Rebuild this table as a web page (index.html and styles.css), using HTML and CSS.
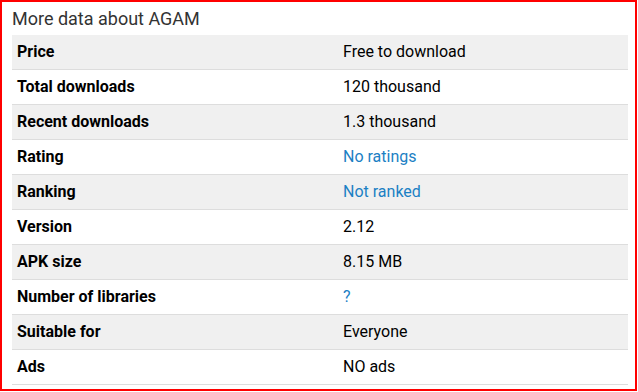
FILE: index.html
```html
<!DOCTYPE html>
<html>
<head>
<meta charset="utf-8">
<link rel="stylesheet" href="styles.css">
</head>
<body>
<div class="frame">
  <h2 class="title">More data about AGAM</h2>
  <div class="table">
    <div class="row odd"><div class="label">Price</div><div class="value">Free to download</div></div>
    <div class="row"><div class="label">Total downloads</div><div class="value">120 thousand</div></div>
    <div class="row odd"><div class="label">Recent downloads</div><div class="value">1.3 thousand</div></div>
    <div class="row"><div class="label">Rating</div><div class="value link">No ratings</div></div>
    <div class="row odd"><div class="label">Ranking</div><div class="value link">Not ranked</div></div>
    <div class="row"><div class="label">Version</div><div class="value">2.12</div></div>
    <div class="row odd"><div class="label">APK size</div><div class="value">8.15 MB</div></div>
    <div class="row"><div class="label">Number of libraries</div><div class="value link">?</div></div>
    <div class="row odd"><div class="label">Suitable for</div><div class="value">Everyone</div></div>
    <div class="row"><div class="label">Ads</div><div class="value">NO ads</div></div>
  </div>
</div>
</body>
</html>
```

FILE: styles.css
```css
html, body {
  margin: 0;
  padding: 0;
  background: #fff;
}
body {
  font-family: Roboto, "Liberation Sans", sans-serif;
  color: #000;
}
.frame {
  box-sizing: border-box;
  width: 637px;
  height: 391px;
  border: 2px solid #ff0000;
  padding: 0 0 0 10px;
}
.title {
  margin: 0;
  font-weight: 400;
  font-size: 18px;
  line-height: 33px;
  color: #333;
}
.table {
  width: 616px;
}
.row {
  display: grid;
  grid-template-columns: 326px 1fr;
  height: 34px;
  align-items: center;
  border-bottom: 1px solid #dddddd;
  font-size: 16px;
}
.row.odd {
  background: #f0f0f0;
}
.label {
  font-weight: 700;
  padding-left: 5px;
  padding-bottom: 2px;
}
.value {
  padding-left: 5px;
  padding-bottom: 2px;
}
.link {
  color: #1b80c4;
}
```
